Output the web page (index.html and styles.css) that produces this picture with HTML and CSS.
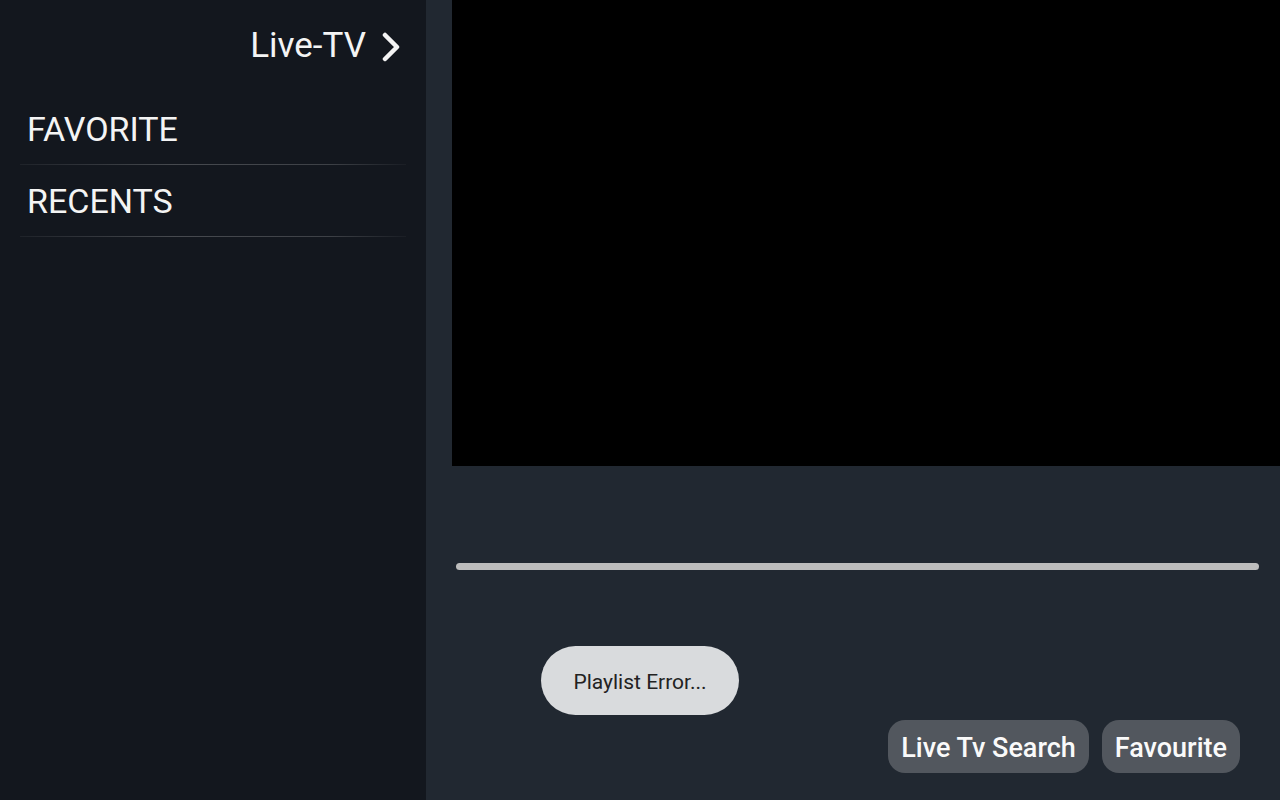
FILE: index.html
```html
<!DOCTYPE html>
<html lang="en">
<head>
    <meta charset="UTF-8">
    <meta name="viewport" content="width=device-width, initial-scale=1.0">
    <title>Live-TV</title>
    <link rel="stylesheet" href="styles.css">
</head>
<body>
    <div class="sidebar">
        <div class="sidebar-header">
            <span>Live-TV</span>
            <i><svg width="20" height="30" viewBox="0 0 20 30" fill="none" xmlns="http://www.w3.org/2000/svg">
                <path d="M4 3L16 15L4 27" stroke="currentColor" stroke-width="4.5" stroke-linecap="round" stroke-linejoin="round"/>
            </svg></i>
        </div>
        <div class="category">FAVORITE</div>
        <div class="category">RECENTS</div>
    </div>

    <div class="main">
        <div class="player"></div>
        <div class="progress"></div>
        <div class="bottom">
            <div class="toast">Playlist Error...</div>
            <div class="actions">
                <div class="action-btn">Live Tv Search</div>
                <div class="action-btn">Favourite</div>
            </div>
        </div>
    </div>
</body>
</html>
```

FILE: styles.css
```css
:root {
    --sidebar-bg: #13171e;
    --main-bg: #212831;
    --text-color: #f4f4f4;
    --btn-bg: #52575e;
    --toast-bg: #d9dbdd;
}

* {
    margin: 0;
    padding: 0;
    box-sizing: border-box;
}

body {
    width: 1280px;
    height: 800px;
    overflow: hidden;
    display: flex;
    background: var(--main-bg);
    color: var(--text-color);
    font-family: Roboto, 'Noto Sans', sans-serif;
}

.sidebar {
    width: 426px;
    height: 100%;
    background: var(--sidebar-bg);
    padding: 0 20px;
}

.sidebar-header {
    height: 93px;
    display: flex;
    align-items: center;
    justify-content: flex-end;
    padding-right: 5px;
    padding-bottom: 2px;
    font-size: 35px;
}

.sidebar-header i {
    display: flex;
    margin-left: 15px;
    margin-top: 2px;
}

.category {
    height: 72px;
    display: flex;
    align-items: center;
    padding-left: 7px;
    font-size: 34px;
    position: relative;
}

.category:after {
    content: '';
    position: absolute;
    left: 0;
    right: 0;
    bottom: 0;
    height: 1px;
    background: linear-gradient(90deg, rgba(255, 255, 255, 0.05) 0%, rgba(255, 255, 255, 0.22) 40%, rgba(255, 255, 255, 0.18) 80%, rgba(255, 255, 255, 0.03) 100%);
}

.main {
    flex: 1;
    display: flex;
    flex-direction: column;
}

.player {
    height: 466px;
    margin-left: 26px;
    background: #000;
}

.progress {
    height: 7px;
    margin: 97px 21px 0 30px;
    background: #bdbdbd;
    border-radius: 4px;
}

.bottom {
    flex: 1;
    position: relative;
    display: flex;
    align-items: flex-end;
    justify-content: flex-end;
    padding: 0 40px 27px 0;
}

/* toast floats above the controls */
.toast {
    position: absolute;
    left: 115px;
    top: 76px;
    width: 198px;
    height: 69px;
    border-radius: 35px;
    background: var(--toast-bg);
    color: #222;
    font-size: 21px;
    display: flex;
    align-items: center;
    justify-content: center;
    padding-top: 2px;
}

.actions {
    display: flex;
    gap: 13px;
}

.action-btn {
    height: 53px;
    padding: 2px 13px 0;
    border-radius: 17px;
    background: var(--btn-bg);
    font-size: 27px;
    font-weight: 500;
    display: flex;
    align-items: center;
    color: #fafafa;
}
```
